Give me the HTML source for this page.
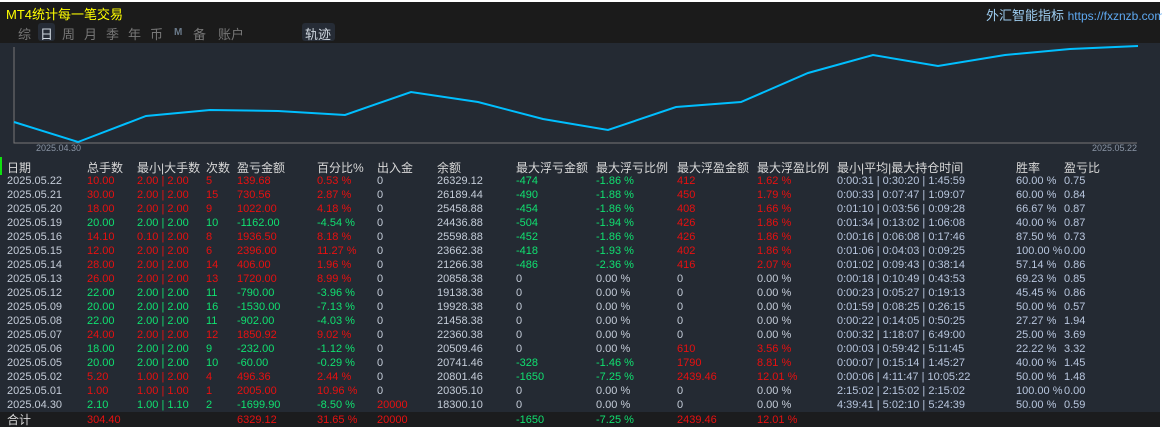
<!DOCTYPE html><html><head><meta charset="utf-8"><style>
body{margin:0;width:1162px;height:427px;overflow:hidden;background:#fff;font-family:"Liberation Sans","Noto Sans CJK SC",sans-serif}
#w{position:absolute;left:0;top:2px;width:1160px;height:425px;background:#242a33}
#top{position:absolute;left:0;top:0;width:1160px;height:41px;background:#1b1b1b}
.t{position:absolute;white-space:nowrap}
.r{position:absolute;left:0;width:1160px;height:14px;font-size:11px;color:#c4ccd8;line-height:14px}
.r span{position:absolute;white-space:nowrap}
.R{color:#e81010}.G{color:#10e070}
.c1{left:7px}.c2{left:87px}.c3{left:137px}.c4{left:206px}.c5{left:237px}.c6{left:317px}.c7{left:377px}.c8{left:437px}.c9{left:516px}.c10{left:596px}.c11{left:677px}.c12{left:757px}.c13{left:837px;color:#b8c6de}.c14{left:1016px;color:#b8c6de}.c15{left:1064px;color:#b8c6de}
.h{font-size:12px;color:#d8d8d8}
</style></head><body><div id="w">
<div id="top">
<div class="t" style="left:6px;top:2px;font-size:13px;color:#ffff00">MT4统计每一笔交易</div>
<div class="t" style="left:986px;top:3px;font-size:13px;color:#9ecdf0">外汇智能指标 <span style="color:#5ea8f0;font-size:12px">https://fxznzb.com/</span></div>
<div class="t" style="left:18px;top:22px;font-size:13px;color:#777">综</div>
<div class="t" style="left:38px;top:21px;width:17px;height:18px;background:#262c36;border-radius:3px"></div>
<div class="t" style="left:40px;top:22px;font-size:13px;color:#d0d8e0">日</div>
<div class="t" style="left:62px;top:22px;font-size:13px;color:#777">周</div>
<div class="t" style="left:84px;top:22px;font-size:13px;color:#777">月</div>
<div class="t" style="left:106px;top:22px;font-size:13px;color:#777">季</div>
<div class="t" style="left:128px;top:22px;font-size:13px;color:#777">年</div>
<div class="t" style="left:150px;top:22px;font-size:13px;color:#777">币</div>
<div class="t" style="left:174px;top:25px;font-size:10px;color:#6a7a8a;font-weight:bold">M</div>
<div class="t" style="left:193px;top:22px;font-size:13px;color:#777">备</div>
<div class="t" style="left:218px;top:22px;font-size:13px;color:#777">账户</div>
<div class="t" style="left:302px;top:21px;width:33px;height:18px;background:#262c36;border-radius:3px"></div>
<div class="t" style="left:305px;top:22px;font-size:13px;color:#d0d8e0">轨迹</div>
</div>
<svg style="position:absolute;left:0;top:0" width="1160" height="160">
<polyline points="14,45 14,141 1137,141" fill="none" stroke="#777" stroke-width="1"/>
<polyline points="14,120 78,140 146,114 210,108 278,109 345,113 411,90 478,100 543,117 608,128 676,105 741,100 808,71 873,53 938,64 1005,53 1070,47 1138,44" fill="none" stroke="#00bfff" stroke-width="2"/>
</svg>
<div class="t" style="left:36px;top:141px;font-size:9px;color:#8a95a5">2025.04.30</div>
<div class="t" style="left:1092px;top:141px;font-size:9px;color:#8a95a5">2025.05.22</div>
<div class="t" style="left:0;top:155px;width:2px;height:18px;background:#10e010"></div>
<div class="r h" style="top:159px"><span class="c1">日期</span><span class="c2">总手数</span><span class="c3">最小|大手数</span><span class="c4">次数</span><span class="c5">盈亏金额</span><span class="c6">百分比%</span><span class="c7">出入金</span><span class="c8">余额</span><span class="c9">最大浮亏金额</span><span class="c10">最大浮亏比例</span><span class="c11">最大浮盈金额</span><span class="c12">最大浮盈比例</span><span class="c13" style="color:#d8d8d8">最小|平均|最大持仓时间</span><span class="c14" style="color:#d8d8d8">胜率</span><span class="c15" style="color:#d8d8d8">盈亏比</span></div>
<div class="r" style="top:172px"><span class="c1">2025.05.22</span><span class="c2 R">10.00</span><span class="c3 R">2.00 | 2.00</span><span class="c4 R">5</span><span class="c5 R">139.68</span><span class="c6 R">0.53 %</span><span class="c7">0</span><span class="c8">26329.12</span><span class="c9 G">-474</span><span class="c10 G">-1.86 %</span><span class="c11 R">412</span><span class="c12 R">1.62 %</span><span class="c13">0:00:31 | 0:30:20 | 1:45:59</span><span class="c14">60.00 %</span><span class="c15">0.75</span></div>
<div class="r" style="top:186px"><span class="c1">2025.05.21</span><span class="c2 R">30.00</span><span class="c3 R">2.00 | 2.00</span><span class="c4 R">15</span><span class="c5 R">730.56</span><span class="c6 R">2.87 %</span><span class="c7">0</span><span class="c8">26189.44</span><span class="c9 G">-490</span><span class="c10 G">-1.88 %</span><span class="c11 R">450</span><span class="c12 R">1.79 %</span><span class="c13">0:00:33 | 0:07:47 | 1:09:07</span><span class="c14">60.00 %</span><span class="c15">0.84</span></div>
<div class="r" style="top:200px"><span class="c1">2025.05.20</span><span class="c2 R">18.00</span><span class="c3 R">2.00 | 2.00</span><span class="c4 R">9</span><span class="c5 R">1022.00</span><span class="c6 R">4.18 %</span><span class="c7">0</span><span class="c8">25458.88</span><span class="c9 G">-454</span><span class="c10 G">-1.86 %</span><span class="c11 R">408</span><span class="c12 R">1.66 %</span><span class="c13">0:01:10 | 0:03:56 | 0:09:28</span><span class="c14">66.67 %</span><span class="c15">0.87</span></div>
<div class="r" style="top:214px"><span class="c1">2025.05.19</span><span class="c2 G">20.00</span><span class="c3 G">2.00 | 2.00</span><span class="c4 G">10</span><span class="c5 G">-1162.00</span><span class="c6 G">-4.54 %</span><span class="c7">0</span><span class="c8">24436.88</span><span class="c9 G">-504</span><span class="c10 G">-1.94 %</span><span class="c11 R">426</span><span class="c12 R">1.86 %</span><span class="c13">0:01:34 | 0:13:02 | 1:06:08</span><span class="c14">40.00 %</span><span class="c15">0.87</span></div>
<div class="r" style="top:228px"><span class="c1">2025.05.16</span><span class="c2 R">14.10</span><span class="c3 R">0.10 | 2.00</span><span class="c4 R">8</span><span class="c5 R">1936.50</span><span class="c6 R">8.18 %</span><span class="c7">0</span><span class="c8">25598.88</span><span class="c9 G">-452</span><span class="c10 G">-1.86 %</span><span class="c11 R">426</span><span class="c12 R">1.86 %</span><span class="c13">0:00:16 | 0:06:08 | 0:17:46</span><span class="c14">87.50 %</span><span class="c15">0.73</span></div>
<div class="r" style="top:242px"><span class="c1">2025.05.15</span><span class="c2 R">12.00</span><span class="c3 R">2.00 | 2.00</span><span class="c4 R">6</span><span class="c5 R">2396.00</span><span class="c6 R">11.27 %</span><span class="c7">0</span><span class="c8">23662.38</span><span class="c9 G">-418</span><span class="c10 G">-1.93 %</span><span class="c11 R">402</span><span class="c12 R">1.86 %</span><span class="c13">0:01:06 | 0:04:03 | 0:09:25</span><span class="c14">100.00 %</span><span class="c15">0.00</span></div>
<div class="r" style="top:256px"><span class="c1">2025.05.14</span><span class="c2 R">28.00</span><span class="c3 R">2.00 | 2.00</span><span class="c4 R">14</span><span class="c5 R">406.00</span><span class="c6 R">1.96 %</span><span class="c7">0</span><span class="c8">21266.38</span><span class="c9 G">-486</span><span class="c10 G">-2.36 %</span><span class="c11 R">416</span><span class="c12 R">2.07 %</span><span class="c13">0:01:02 | 0:09:43 | 0:38:14</span><span class="c14">57.14 %</span><span class="c15">0.86</span></div>
<div class="r" style="top:270px"><span class="c1">2025.05.13</span><span class="c2 R">26.00</span><span class="c3 R">2.00 | 2.00</span><span class="c4 R">13</span><span class="c5 R">1720.00</span><span class="c6 R">8.99 %</span><span class="c7">0</span><span class="c8">20858.38</span><span class="c9">0</span><span class="c10">0.00 %</span><span class="c11">0</span><span class="c12">0.00 %</span><span class="c13">0:00:18 | 0:10:49 | 0:43:53</span><span class="c14">69.23 %</span><span class="c15">0.85</span></div>
<div class="r" style="top:284px"><span class="c1">2025.05.12</span><span class="c2 G">22.00</span><span class="c3 G">2.00 | 2.00</span><span class="c4 G">11</span><span class="c5 G">-790.00</span><span class="c6 G">-3.96 %</span><span class="c7">0</span><span class="c8">19138.38</span><span class="c9">0</span><span class="c10">0.00 %</span><span class="c11">0</span><span class="c12">0.00 %</span><span class="c13">0:00:23 | 0:05:27 | 0:19:13</span><span class="c14">45.45 %</span><span class="c15">0.86</span></div>
<div class="r" style="top:298px"><span class="c1">2025.05.09</span><span class="c2 G">20.00</span><span class="c3 G">2.00 | 2.00</span><span class="c4 G">16</span><span class="c5 G">-1530.00</span><span class="c6 G">-7.13 %</span><span class="c7">0</span><span class="c8">19928.38</span><span class="c9">0</span><span class="c10">0.00 %</span><span class="c11">0</span><span class="c12">0.00 %</span><span class="c13">0:01:59 | 0:08:25 | 0:26:15</span><span class="c14">50.00 %</span><span class="c15">0.57</span></div>
<div class="r" style="top:312px"><span class="c1">2025.05.08</span><span class="c2 G">22.00</span><span class="c3 G">2.00 | 2.00</span><span class="c4 G">11</span><span class="c5 G">-902.00</span><span class="c6 G">-4.03 %</span><span class="c7">0</span><span class="c8">21458.38</span><span class="c9">0</span><span class="c10">0.00 %</span><span class="c11">0</span><span class="c12">0.00 %</span><span class="c13">0:00:22 | 0:14:05 | 0:50:25</span><span class="c14">27.27 %</span><span class="c15">1.94</span></div>
<div class="r" style="top:326px"><span class="c1">2025.05.07</span><span class="c2 R">24.00</span><span class="c3 R">2.00 | 2.00</span><span class="c4 R">12</span><span class="c5 R">1850.92</span><span class="c6 R">9.02 %</span><span class="c7">0</span><span class="c8">22360.38</span><span class="c9">0</span><span class="c10">0.00 %</span><span class="c11">0</span><span class="c12">0.00 %</span><span class="c13">0:00:32 | 1:18:07 | 6:49:00</span><span class="c14">25.00 %</span><span class="c15">3.69</span></div>
<div class="r" style="top:340px"><span class="c1">2025.05.06</span><span class="c2 G">18.00</span><span class="c3 G">2.00 | 2.00</span><span class="c4 G">9</span><span class="c5 G">-232.00</span><span class="c6 G">-1.12 %</span><span class="c7">0</span><span class="c8">20509.46</span><span class="c9">0</span><span class="c10">0.00 %</span><span class="c11 R">610</span><span class="c12 R">3.56 %</span><span class="c13">0:00:03 | 0:59:42 | 5:11:45</span><span class="c14">22.22 %</span><span class="c15">3.32</span></div>
<div class="r" style="top:354px"><span class="c1">2025.05.05</span><span class="c2 G">20.00</span><span class="c3 G">2.00 | 2.00</span><span class="c4 G">10</span><span class="c5 G">-60.00</span><span class="c6 G">-0.29 %</span><span class="c7">0</span><span class="c8">20741.46</span><span class="c9 G">-328</span><span class="c10 G">-1.46 %</span><span class="c11 R">1790</span><span class="c12 R">8.81 %</span><span class="c13">0:00:07 | 0:15:14 | 1:45:27</span><span class="c14">40.00 %</span><span class="c15">1.45</span></div>
<div class="r" style="top:368px"><span class="c1">2025.05.02</span><span class="c2 R">5.20</span><span class="c3 R">1.00 | 2.00</span><span class="c4 R">4</span><span class="c5 R">496.36</span><span class="c6 R">2.44 %</span><span class="c7">0</span><span class="c8">20801.46</span><span class="c9 G">-1650</span><span class="c10 G">-7.25 %</span><span class="c11 R">2439.46</span><span class="c12 R">12.01 %</span><span class="c13">0:00:06 | 4:11:47 | 10:05:22</span><span class="c14">50.00 %</span><span class="c15">1.48</span></div>
<div class="r" style="top:382px"><span class="c1">2025.05.01</span><span class="c2 R">1.00</span><span class="c3 R">1.00 | 1.00</span><span class="c4 R">1</span><span class="c5 R">2005.00</span><span class="c6 R">10.96 %</span><span class="c7">0</span><span class="c8">20305.10</span><span class="c9">0</span><span class="c10">0.00 %</span><span class="c11">0</span><span class="c12">0.00 %</span><span class="c13">2:15:02 | 2:15:02 | 2:15:02</span><span class="c14">100.00 %</span><span class="c15">0.00</span></div>
<div class="r" style="top:396px"><span class="c1">2025.04.30</span><span class="c2 G">2.10</span><span class="c3 G">1.00 | 1.10</span><span class="c4 G">2</span><span class="c5 G">-1699.90</span><span class="c6 G">-8.50 %</span><span class="c7 R">20000</span><span class="c8">18300.10</span><span class="c9">0</span><span class="c10">0.00 %</span><span class="c11">0</span><span class="c12">0.00 %</span><span class="c13">4:39:41 | 5:02:10 | 5:24:39</span><span class="c14">50.00 %</span><span class="c15">0.59</span></div>
<div style="position:absolute;left:0;top:410px;width:1160px;height:15px;background:#1b1c1e"></div>
<div class="r" style="top:411px"><span class="c1" style="font-size:12px;color:#d8d8d8">合计</span><span class="c2 R">304.40</span><span class="c5 R">6329.12</span><span class="c6 R">31.65 %</span><span class="c7 R">20000</span><span class="c9 G">-1650</span><span class="c10 G">-7.25 %</span><span class="c11 R">2439.46</span><span class="c12 R">12.01 %</span></div>
</div></body></html>
